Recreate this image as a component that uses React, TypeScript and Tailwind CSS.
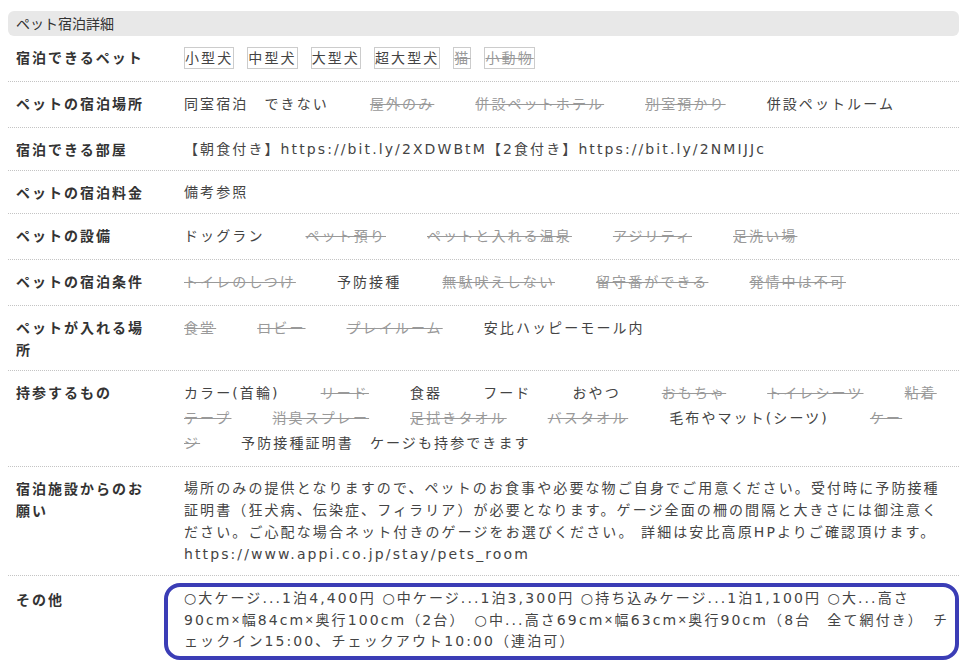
import React from 'react';

type Item = { t: string; off?: boolean };

const petTypes: Item[] = [
  { t: '小型犬' },
  { t: '中型犬' },
  { t: '大型犬' },
  { t: '超大型犬' },
  { t: '猫', off: true },
  { t: '小動物', off: true },
];

const place: Item[] = [
  { t: '同室宿泊　できない' },
  { t: '屋外のみ', off: true },
  { t: '併設ペットホテル', off: true },
  { t: '別室預かり', off: true },
  { t: '併設ペットルーム' },
];

const facility: Item[] = [
  { t: 'ドッグラン' },
  { t: 'ペット預り', off: true },
  { t: 'ペットと入れる温泉', off: true },
  { t: 'アジリティ', off: true },
  { t: '足洗い場', off: true },
];

const conditions: Item[] = [
  { t: 'トイレのしつけ', off: true },
  { t: '予防接種' },
  { t: '無駄吠えしない', off: true },
  { t: '留守番ができる', off: true },
  { t: '発情中は不可', off: true },
];

const areas: Item[] = [
  { t: '食堂', off: true },
  { t: 'ロビー', off: true },
  { t: 'プレイルーム', off: true },
  { t: '安比ハッピーモール内' },
];

const bring: Item[] = [
  { t: 'カラー(首輪)' },
  { t: 'リード', off: true },
  { t: '食器' },
  { t: 'フード' },
  { t: 'おやつ' },
  { t: 'おもちゃ', off: true },
  { t: 'トイレシーツ', off: true },
  { t: '粘着テープ', off: true },
  { t: '消臭スプレー', off: true },
  { t: '足拭きタオル', off: true },
  { t: 'バスタオル', off: true },
  { t: '毛布やマット(シーツ)' },
  { t: 'ケージ', off: true },
  { t: '予防接種証明書　ケージも持参できます' },
];

const other =
  '○大ケージ...1泊4,400円 ○中ケージ...1泊3,300円 ○持ち込みケージ...1泊1,100円 ○大...高さ90cm×幅84cm×奥行100cm（2台）　○中...高さ69cm×幅63cm×奥行90cm（8台　全て網付き）　チェックイン15:00、チェックアウト10:00（連泊可）';

const labelCls =
  "w-[176px] shrink-0 pl-2 pr-7 text-[14px] leading-[22px] font-bold tracking-[2px] text-[#333] font-['Noto_Sans_CJK_JP','Noto_Sans',sans-serif]";
// latin glyphs of the values are wide (Verdana-like), kana/kanji from Noto CJK
const valueCls =
  "flex-1 pr-2 text-[14px] tracking-[2.1px] text-[#444] font-['DejaVu_Sans','Noto_Sans_CJK_JP',sans-serif]";

const Row: React.FC<{ label: string; children: React.ReactNode }> = ({ label, children }) => (
  <div className="flex border-b border-dotted border-[#c4c4c4] py-[10px]">
    <div className={labelCls}>{label}</div>
    <div className={valueCls}>{children}</div>
  </div>
);

const Items: React.FC<{ items: Item[] }> = ({ items }) => (
  <div className="leading-[25px]">
    {items.map((it, i) => (
      <span key={i} className={it.off ? 'mr-[41px] text-[#999] line-through' : 'mr-[41px]'}>
        {it.t}
      </span>
    ))}
  </div>
);

export default function App() {
  return (
    <div className="w-[967px] bg-white px-2 pt-[11px] font-['Noto_Sans_CJK_JP','Noto_Sans',sans-serif]">
      <div className="h-[25px] rounded-md bg-[#e8e8e8] pl-2 text-[14px] leading-[25px] text-[#333]">
        ペット宿泊詳細
      </div>

      <Row label="宿泊できるペット">
        <div className="leading-[25px]">
          {petTypes.map((p, i) => (
            <span
              key={i}
              className={
                p.off
                  ? 'mr-[13px] inline-block border border-[#ccc] leading-[20px] text-[#999] line-through'
                  : 'mr-[13px] inline-block border border-[#ccc] leading-[20px]'
              }
            >
              {p.t}
            </span>
          ))}
        </div>
      </Row>

      <Row label="ペットの宿泊場所">
        <Items items={place} />
      </Row>

      <Row label="宿泊できる部屋">
        <div className="leading-[22px]">
          【朝食付き】https://bit.ly/2XDWBtM【2食付き】https://bit.ly/2NMIJJc
        </div>
      </Row>

      <Row label="ペットの宿泊料金">
        <div className="leading-[22px]">備考参照</div>
      </Row>

      <Row label="ペットの設備">
        <Items items={facility} />
      </Row>

      <Row label="ペットの宿泊条件">
        <Items items={conditions} />
      </Row>

      <Row label="ペットが入れる場所">
        <Items items={areas} />
      </Row>

      <Row label="持参するもの">
        <Items items={bring} />
      </Row>

      <Row label="宿泊施設からのお願い">
        <div className="leading-[22px]">
          場所のみの提供となりますので、ペットのお食事や必要な物ご自身でご用意ください。受付時に予防接種証明書（狂犬病、伝染症、フィラリア）が必要となります。ゲージ全面の柵の間隔と大きさには御注意ください。ご心配な場合ネット付きのゲージをお選びください。
          詳細は安比高原HPよりご確認頂けます。 https://www.appi.co.jp/stay/pets_room
        </div>
      </Row>

      <div className="flex py-[12px]">
        <div className={labelCls}>その他</div>
        <div className={valueCls + ' relative leading-[21px]'}>
          {other.split('×').map((part, i) => (
            <React.Fragment key={i}>
              {i > 0 && <span className="font-['Noto_Sans',sans-serif]">×</span>}
              {part}
            </React.Fragment>
          ))}
          <div className="pointer-events-none absolute -top-[5px] -bottom-[8px] -left-[20px] right-0 rounded-[16px] border-4 border-[#3b3db6]" />
        </div>
      </div>
    </div>
  );
}
